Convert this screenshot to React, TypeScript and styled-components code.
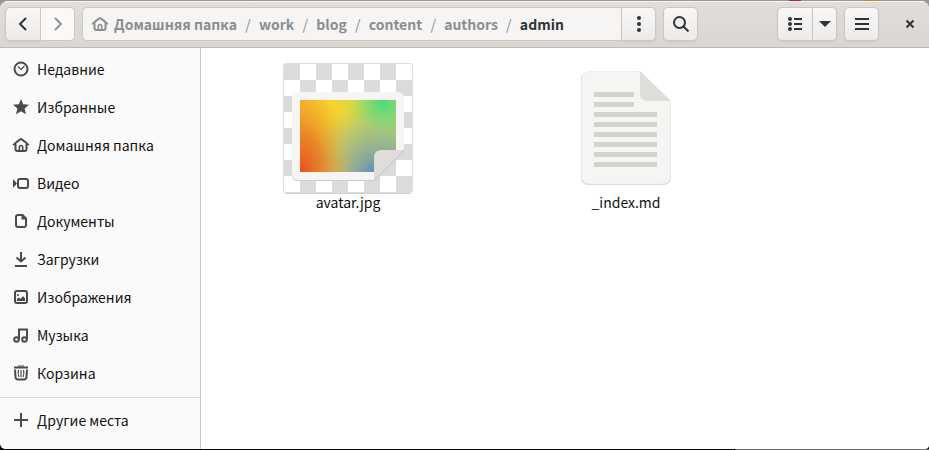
import React from "react";
import styled, { createGlobalStyle, css } from "styled-components";

const GlobalStyle = createGlobalStyle`
  *, *::before, *::after { box-sizing: border-box; }
  body { margin: 0; background: #0a0a0a; }
  button, a { font: inherit; color: inherit; }
`;

const Desktop = styled.div`
  min-height: 100vh;
  display: flex;
  flex-direction: column;
  padding: 1px 0;
  background:
    linear-gradient(#6f6d6c, #6f6d6c) right bottom / 194px 1px no-repeat,
    linear-gradient(#c01c3c, #c01c3c) 789px 0 / 12px 1px no-repeat,
    linear-gradient(#c98040, #c98040) 865px 0 / 14px 1px no-repeat,
    linear-gradient(#9a9797, #9a9797) 0 0 / 100% 8px no-repeat,
    #0a0a0a;
  font-family: "Noto Sans CJK SC", "Noto Sans", sans-serif;
  font-size: 14px;
  line-height: 20px;
  color: #111111;
`;

const Window = styled.div`
  flex: 1;
  display: flex;
  flex-direction: column;
  overflow: hidden;
  border-radius: 8px 8px 4px 6px;
  background: #ffffff;
`;

const HeaderBar = styled.header`
  display: flex;
  align-items: center;
  gap: 7px;
  height: 47px;
  padding: 0 7px 1px 5px;
  border-top: 1px solid #f8f7f6;
  border-bottom: 1px solid #bfb8b1;
  background: linear-gradient(#e1dedb, #dad6d2);
  color: #2e3436;
`;

const Linked = styled.div`
  display: flex;
  flex: none;
`;

const PathGroup = styled.div`
  display: flex;
  flex: 0 1 574px;
  min-width: 0;
`;

const Spacer = styled.div`
  flex: 1;
`;

const ToolButton = styled.button<{ $edge?: "left" | "right"; $width?: number }>`
  flex: none;
  display: flex;
  align-items: center;
  justify-content: center;
  width: ${({ $width = 35 }) => $width}px;
  height: 34px;
  padding: 0;
  border: 1px solid #cdc7c2;
  border-radius: 5px;
  background: linear-gradient(#f8f7f6, #edebe9);
  box-shadow: 0 1px 2px rgba(0, 0, 0, 0.08);
  ${({ $edge }) => $edge === "left" && css`border-radius: 5px 0 0 5px;`}
  ${({ $edge }) => $edge === "right" && css`
    border-radius: 0 5px 5px 0;
    border-left-width: 0;
  `}
  &:disabled {
    background: #faf9f8;
    color: #929595;
    box-shadow: none;
  }
`;

const CloseButton = styled.button`
  display: flex;
  align-items: center;
  justify-content: center;
  width: 24px;
  height: 34px;
  margin-left: 12px;
  padding: 0;
  border: 0;
  background: none;
`;

const PathBar = styled.nav`
  flex: 1;
  min-width: 0;
  display: flex;
  align-items: center;
  height: 34px;
  padding: 0 9px;
  overflow: hidden;
  white-space: nowrap;
  border: 1px solid #cdc7c2;
  border-radius: 5px 0 0 5px;
  background: #f6f5f4;
  color: #8b8e8f;
`;

const Crumb = styled.a<{ $current?: boolean }>`
  display: flex;
  align-items: center;
  gap: 6px;
  font-weight: 700;
  text-decoration: none;
  color: ${({ $current }) => ($current ? "#2e3436" : "#8b8e8f")};
`;

const Slash = styled.span`
  width: 22px;
  text-align: center;
`;

const Body = styled.div`
  flex: 1;
  display: flex;
`;

const Sidebar = styled.nav`
  flex: none;
  width: 201px;
  padding: 2px 0;
  border-right: 1px solid #cdc7c2;
  background: #fafafa;
`;

const Place = styled.a`
  display: flex;
  align-items: center;
  gap: 8px;
  height: 38px;
  padding: 0 13px;
  text-decoration: none;
  svg { color: #4a4a4a; }
`;

const Divider = styled.hr`
  height: 1px;
  margin: 5px 0 3px;
  border: 0;
  background: #dcdad8;
`;

const Files = styled.main`
  flex: 1;
  display: grid;
  grid-template-columns: repeat(auto-fill, 278px);
  align-content: start;
  padding: 15px 8px;
`;

const File = styled.button`
  display: flex;
  flex-direction: column;
  align-items: center;
  padding: 0;
  border: 0;
  background: none;
  line-height: 18px;
`;

const Thumb = styled.span`
  display: flex;
  align-items: center;
  justify-content: center;
  height: 130px;
`;

const Icon = styled.svg.attrs({ viewBox: "0 0 16 16", width: 16, height: 16, "aria-hidden": true })`
  flex: none;
  display: block;
  overflow: visible;
  fill: none;
  stroke: currentColor;
  stroke-width: 2;
`;

const Filled = styled.g`
  fill: currentColor;
  stroke: none;
`;

const icons = {
  back: <path d="M10.5 2.5 5 8l5.5 5.5" strokeLinecap="round" />,
  forward: <path d="M5.5 2.5 11 8l-5.5 5.5" strokeLinecap="round" />,
  dots: <Filled><circle cx="8" cy="2" r="2" /><circle cx="8" cy="8" r="2" /><circle cx="8" cy="14" r="2" /></Filled>,
  search: <><circle cx="6.5" cy="6.5" r="5.5" /><path d="m10.5 10.5 5 5" /></>,
  list: <Filled><circle cx="3" cy="3" r="2" /><circle cx="3" cy="8" r="2" /><circle cx="3" cy="13" r="2" /><path d="M7 2h8v2H7zM7 7h8v2H7zM7 12h8v2H7z" /></Filled>,
  down: <Filled><path d="M2 5h12l-6 6z" /></Filled>,
  menu: <path d="M1 3h14M1 8h14M1 13h14" />,
  close: <path d="m4.5 4.5 7 7M11.5 4.5l-7 7" />,
  recent: <><circle cx="8" cy="8" r="6.5" /><path d="m5 5.5 3 3 3.5-3.5" strokeWidth="1.2" /></>,
  star: <Filled><path d="m8 0 2.2 5.2 5.8.5-4.4 3.7 1.4 5.9L8 12.2l-5 3.1 1.4-5.9L0 5.7l5.8-.5z" /></Filled>,
  home: <><path d="M.8 7.6Q4 4.5 7.3 2.3q.7-.5 1.4 0Q12 4.5 15.2 7.6" strokeLinecap="round" /><path d="M2.5 7v5q0 2 2 2h7q2 0 2-2V7" /><path d="M6.3 14v-3.5Q6.3 8.5 8 8.5t1.7 2V14" strokeWidth="1.6" /></>,
  video: <><rect x="5" y="4" width="10" height="9" rx="2" /><Filled><path d="M0 4l4 4.5L0 13z" /></Filled></>,
  document: <><path d="M5 2h4.5L13 5.5V12q0 2-2 2H5q-2 0-2-2V4q0-2 2-2z" /><Filled><path d="M8.5 2v4.5H13z" /></Filled></>,
  download: <><path d="M8 1v9M3.5 6.5 8 10.5l4.5-4" /><path d="M2 15h12" /></>,
  image: <><rect x="2" y="2" width="12" height="12" rx="2" /><Filled><circle cx="5" cy="6" r="1" /><path d="M4 12v-2l2-1.5L7.5 10 10 7l2 2.5V12z" /></Filled></>,
  music: <><path d="M6 12V2.500h8V12" /><circle cx="3.5" cy="12.5" r="2.3" /><circle cx="11.5" cy="12.5" r="2.3" /></>,
  trash: <><path d="M1 2.5h14" /><path d="m2 4.5.5 7.5q.2 2.500 2.500 2.500h6q2.300 0 2.500-2.500l.5-7.500" /><path d="M5 1h6M5.500 5q-1 3.500.5 7M8 5v7M10.500 5q1 3.500-.5 7" strokeWidth="1.2" /></>,
  plus: <path d="M8 1v14M1 8h14" />,
};

type IconName = keyof typeof icons;

const Glyph = ({ name }: { name: IconName }) => <Icon>{icons[name]}</Icon>;

const crumbs = ["Домашняя папка", "work", "blog", "content", "authors", "admin"];

const places: { icon: IconName; label: string }[] = [
  { icon: "recent", label: "Недавние" },
  { icon: "star", label: "Избранные" },
  { icon: "home", label: "Домашняя папка" },
  { icon: "video", label: "Видео" },
  { icon: "document", label: "Документы" },
  { icon: "download", label: "Загрузки" },
  { icon: "image", label: "Изображения" },
  { icon: "music", label: "Музыка" },
  { icon: "trash", label: "Корзина" },
];

const ImageThumb = () => (
  <svg width="130" height="131" viewBox="0 0 130 131" aria-hidden="true">
    <defs>
      <pattern id="checks" x="1" y="1" width="32" height="32" patternUnits="userSpaceOnUse">
        <path fill="#fff" d="M0 0h32v32H0z" />
        <path fill="#dbdbdb" d="M0 0h16v16H0zM16 16h16v16H16z" />
      </pattern>
      <linearGradient id="warm" gradientUnits="userSpaceOnUse" x1="15" y1="50" x2="112" y2="10">
        <stop offset="0" stopColor="#f0a92a" />
        <stop offset="0.36" stopColor="#f5d52e" />
        <stop offset="0.65" stopColor="#bfdd52" />
        <stop offset="1" stopColor="#7ada78" />
      </linearGradient>
      <radialGradient id="red" gradientUnits="userSpaceOnUse" cx="0" cy="0" r="1" gradientTransform="translate(17 109) scale(52 84)">
        <stop offset="0" stopColor="#e5501f" />
        <stop offset="0.45" stopColor="#e97c25" stopOpacity="0.8" />
        <stop offset="1" stopColor="#f5c22c" stopOpacity="0" />
      </radialGradient>
      <radialGradient id="blue" gradientUnits="userSpaceOnUse" cx="95" cy="113" r="76">
        <stop offset="0" stopColor="#4b84cc" />
        <stop offset="0.28" stopColor="#80a2a8" stopOpacity="0.9" />
        <stop offset="0.65" stopColor="#a3bf88" stopOpacity="0.7" />
        <stop offset="1" stopColor="#b8c870" stopOpacity="0" />
      </radialGradient>
      <radialGradient id="green" gradientUnits="userSpaceOnUse" cx="99" cy="40" r="30">
        <stop offset="0" stopColor="#4bdc7c" />
        <stop offset="1" stopColor="#6bd880" stopOpacity="0" />
      </radialGradient>
    </defs>
    <rect x=".5" y=".5" width="129" height="129" rx="2" fill="url(#checks)" stroke="#deddda" />
    <path d="M2 130.500h126" stroke="#d0cfcb" />
    <path d="M15 30h100q6 0 6 6v52l-30 30H15q-6 0-6-6V36q0-6 6-6z" fill="#cfceca" />
    <path d="M15 29h100q6 0 6 6v52l-30 30H15q-6 0-6-6V35q0-6 6-6z" fill="#f6f5f4" />
    {["warm", "blue", "red", "green"].map((fill) => (
      <path key={fill} d="M17 37h96v54l-18 18H17z" fill={`url(#${fill})`} />
    ))}
    <path d="M121 88v-1H99q-8 0-8 8v23z" fill="#c3c2bf" />
    <path d="M121 87H99q-8 0-8 8v22z" fill="#deddda" />
  </svg>
);

const TextThumb = () => (
  <svg width="90" height="114" viewBox="0 0 90 114" aria-hidden="true">
    <path d="M8 1h51l31 31v74q0 8-8 8H8q-8 0-8-8V9q0-8 8-8z" fill="#d9d8d5" />
    <path d="M8.500.5H59l30.500 30.500V105q0 8-8 8h-73q-8 0-8-8V8.500q0-8 8-8z" fill="#f6f5f4" stroke="#e6e5e3" strokeWidth=".5" />
    <path d="M59 0v22q0 8 8 8h23z" fill="#deddda" />
    <path
      d="M13 23.500h40M13 33.500h40M13 43.500h63M13 53.500h63M13 63.500h63M13 73.500h63M13 83.500h63M13 93.500h63"
      stroke="#d3d2cf"
      strokeWidth="5"
    />
  </svg>
);

export default function App() {
  return (
    <>
      <GlobalStyle />
      <Desktop>
        <Window>
          <HeaderBar>
            <Linked>
              <ToolButton $edge="left" $width={36} aria-label="Назад"><Glyph name="back" /></ToolButton>
              <ToolButton $edge="right" $width={34} disabled aria-label="Вперёд"><Glyph name="forward" /></ToolButton>
            </Linked>
            <PathGroup>
              <PathBar aria-label="Путь">
                {crumbs.map((name, i) => (
                  <React.Fragment key={name}>
                    {i > 0 && <Slash>/</Slash>}
                    <Crumb href="#" $current={i === crumbs.length - 1}>
                      {i === 0 && <Glyph name="home" />}
                      {name}
                    </Crumb>
                  </React.Fragment>
                ))}
              </PathBar>
              <ToolButton $edge="right" $width={34} aria-label="Действия с папкой"><Glyph name="dots" /></ToolButton>
            </PathGroup>
            <ToolButton aria-label="Поиск"><Glyph name="search" /></ToolButton>
            <Spacer />
            <Linked>
              <ToolButton $edge="left" $width={36} aria-label="Список"><Glyph name="list" /></ToolButton>
              <ToolButton $edge="right" $width={24} aria-label="Параметры вида"><Glyph name="down" /></ToolButton>
            </Linked>
            <ToolButton aria-label="Меню"><Glyph name="menu" /></ToolButton>
            <CloseButton aria-label="Закрыть"><Glyph name="close" /></CloseButton>
          </HeaderBar>
          <Body>
            <Sidebar aria-label="Места">
              {places.map(({ icon, label }) => (
                <Place href="#" key={label}><Glyph name={icon} />{label}</Place>
              ))}
              <Divider />
              <Place href="#"><Glyph name="plus" />Другие места</Place>
            </Sidebar>
            <Files>
              <File><Thumb><ImageThumb /></Thumb>avatar.jpg</File>
              <File><Thumb><TextThumb /></Thumb>_index.md</File>
            </Files>
          </Body>
        </Window>
      </Desktop>
    </>
  );
}
